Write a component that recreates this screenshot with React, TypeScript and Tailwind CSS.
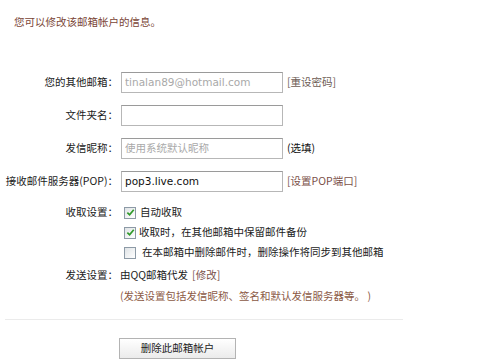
import type { ReactNode } from "react";

const Check = ({ checked }: { checked: boolean }) => (
  <span className="flex h-[12px] w-[12px] shrink-0 items-center justify-center border border-[#8d9aa6] bg-gradient-to-br from-[#dfe3e6] to-white">
    {checked && (
      <svg viewBox="0 0 10 10" className="h-[9px] w-[9px]">
        <path d="M1.5 5.2 L4 7.6 L8.6 2" fill="none" stroke="#2f9a2a" strokeWidth="1.9" />
      </svg>
    )}
  </span>
);

const Row = ({ label, children }: { label: string; children: ReactNode }) => (
  <div className="flex h-[21px] items-center">
    <span className="w-[118px] shrink-0 whitespace-nowrap text-right">{label}</span>
    {children}
  </div>
);

const inputCls =
  "ml-[3px] h-[21px] w-[162px] border border-[#b7b7b7] border-t-[#9a9a9a] bg-white px-[3px] text-[10.5px] outline-none font-['DejaVu_Sans',sans-serif]";

export default function App() {
  return (
    <div className="h-[361px] w-[500px] bg-white text-[10.5px] leading-none text-[#1a1a1a] font-['Noto_Sans_CJK_SC',sans-serif]">
      <p className="pl-[14px] pt-[17px] text-[#7a4536]">您可以修改该邮箱帐户的信息。</p>

      <div className="mt-[44px] flex flex-col gap-[12px]">
        <Row label="您的其他邮箱：">
          <input className={`${inputCls} text-[#a9a9a9]`} defaultValue="tinalan89@hotmail.com" disabled />
          <span className="ml-[4px] text-[#6d5c55]">[重设密码]</span>
        </Row>
        <Row label="文件夹名：">
          <input className={inputCls} />
        </Row>
        <Row label="发信昵称：">
          <input
            className={`${inputCls} placeholder:text-[#a9a9a9] placeholder:font-['Noto_Sans_CJK_SC']`}
            placeholder="使用系统默认昵称"
          />
          <span className="ml-[4px] text-[#111]">(选填)</span>
        </Row>
        <Row label="接收邮件服务器(POP)：">
          <input className={`${inputCls} text-[#111]`} defaultValue="pop3.live.com" />
          <span className="ml-[4px] text-[#7a5048]">[设置POP端口]</span>
        </Row>
      </div>

      <div className="mt-[11px] flex flex-col">
        <div className="flex h-[20px] items-center">
          <span className="w-[118px] shrink-0 text-right">收取设置：</span>
          <span className="ml-[6px]">
            <Check checked />
          </span>
          <span className="ml-[4px]">自动收取</span>
        </div>
        <div className="flex h-[20px] items-center pl-[124px]">
          <Check checked />
          <span className="ml-[3px]">收取时，在其他邮箱中保留邮件备份</span>
        </div>
        <div className="flex h-[20px] items-center pl-[124px]">
          <Check checked={false} />
          <span className="ml-[6px]">在本邮箱中删除邮件时，删除操作将同步到其他邮箱</span>
        </div>
        <div className="mt-[3px] flex h-[20px] items-center">
          <span className="w-[118px] shrink-0 text-right">发送设置：</span>
          <span className="ml-[2px]">由QQ邮箱代发</span>
          <span className="ml-[4px] text-[#7a5048]">[修改]</span>
        </div>
        <div className="mt-[1px] flex h-[20px] items-center pl-[120px] text-[#8c5a45]">
          (发送设置包括发信昵称、签名和默认发信服务器等。 )
        </div>
      </div>

      <div className="ml-[5px] mt-[12px] h-px w-[398px] bg-[#ebebeb]" />

      <button className="ml-[119px] mt-[18px] h-[21px] w-[117px] border border-[#b3b3b3] bg-gradient-to-b from-white to-[#ebebeb] text-[10.5px] text-[#222]">
        删除此邮箱帐户
      </button>
    </div>
  );
}
